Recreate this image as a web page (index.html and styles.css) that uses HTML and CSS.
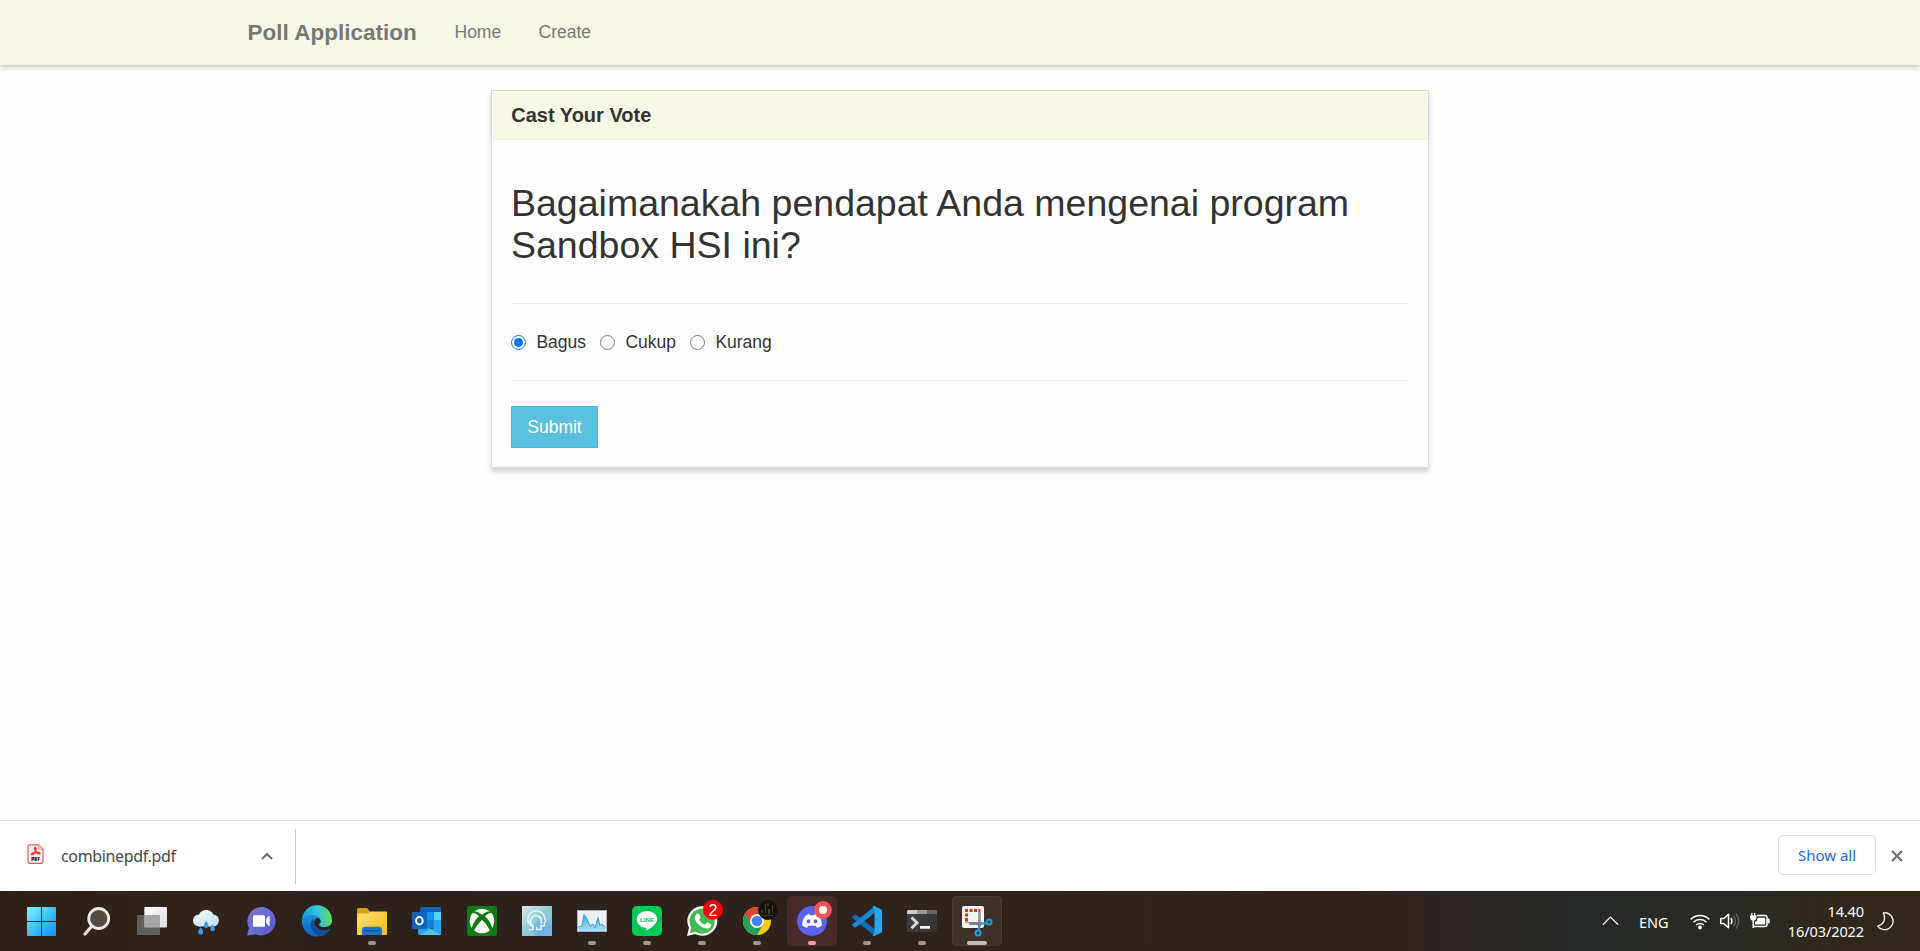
FILE: index.html
```html
<!DOCTYPE html>
<html lang="id">
<head>
<meta charset="utf-8">
<title>Poll Application</title>
<link rel="stylesheet" href="styles.css">
</head>
<body>
<div class="page">
  <nav class="navbar">
    <a class="brand">Poll Application</a>
    <a class="nav-link">Home</a>
    <a class="nav-link">Create</a>
  </nav>
  <main class="content">
    <section class="panel">
      <h3 class="panel-title">Cast Your Vote</h3>
      <form class="panel-body">
        <h2 class="question">Bagaimanakah pendapat Anda mengenai program Sandbox HSI ini?</h2>
        <div class="options">
          <label class="option"><input class="radio" type="radio" name="vote" checked><span>Bagus</span></label>
          <label class="option"><input class="radio" type="radio" name="vote"><span>Cukup</span></label>
          <label class="option"><input class="radio" type="radio" name="vote"><span>Kurang</span></label>
        </div>
        <button class="submit" type="button">Submit</button>
      </form>
    </section>
  </main>
</div>

<div class="downloads">
  <div class="download-item">
    <svg class="pdf-icon" width="17" height="20" viewBox="0 0 17 20"><path d="M2 .8h9.500l4.500 4.500v12q0 2-2 2h-11q-2 0-2-2v-14.500q0-2 1-2z" fill="#f4f4f4" stroke="#f4574d" stroke-width="1.200"/><path d="M11.500.8v4.500H16" fill="#fbb" stroke="#f8a19b"/><path d="M8 3.500c1.500 0 .8 3.500-.3 5.300-1 1.500-2.800 2.200-3.200 1.500-.5-1 3.500-2.300 6.500-2.100 2 .2 2.500 1.600 1 1.600-1.700 0-4.300-2.800-4.400-5 0-.8 0-1.300.4-1.300z" fill="none" stroke="#f23a32" stroke-width="1.600"/><path d="M5 13v4M5 13.500h1.500v1.800H5M8 13.500v3h1.200v-3zM11.200 17v-3.500h1.500M11 15.200h1.500" fill="none" stroke="#333" stroke-width="1.100"/></svg>
    <span class="file-name">combinepdf.pdf</span>
    <svg class="caret" width="12" height="8" viewBox="0 0 12 8"><path d="M1 7l5-5 5 5" fill="none" stroke="#6a6c70" stroke-width="2"/></svg>
  </div>
  <button class="show-all" type="button">Show all</button>
  <svg class="close" width="12" height="12" viewBox="0 0 12 12"><path d="M1 1l10 10M11 1L1 11" stroke="#6a6c70" stroke-width="2.200"/></svg>
</div>

<div class="taskbar">
  <div class="apps">
    <svg class="app" viewBox="0 0 50 50"><defs><linearGradient id="win" x1="10" y1="11" x2="39" y2="40" gradientUnits="userSpaceOnUse"><stop offset="0" stop-color="#7cf3ff"/><stop offset=".5" stop-color="#3dc1fa"/><stop offset="1" stop-color="#0d92fb"/></linearGradient></defs><path fill="url(#win)" d="M11 11h13v14H10V12q0-1 1-1zM25 11h13q1 0 1 1v13H25zM10 26h14v14H11q-1 0-1-1zM25 26h14v13q0 1-1 1H25z"/></svg>
    <svg class="app" viewBox="0 0 50 50"><path d="M19.500 30.500l-6.500 7.500" stroke="#dfe1e2" stroke-width="3.200" stroke-linecap="round"/><circle cx="26.700" cy="22.500" r="10" fill="#574a40" stroke="#e8eaeb" stroke-width="2.800"/></svg>
    <svg class="app" viewBox="0 0 50 50"><defs><linearGradient id="tv" x2="1" y2="1"><stop offset="0" stop-color="#fff"/><stop offset="1" stop-color="#ddd"/></linearGradient></defs><rect x="17.300" y="11" width="22.700" height="20.500" rx="1" fill="url(#tv)"/><path d="M11 19h6.300v12.500H33V38q0 1-1 1H11q-1 0-1-1V20q0-1 1-1z" fill="#5f5f5e"/><path d="M17.300 19H32q1 0 1 1v11.500H17.300z" fill="#a5a5a5"/></svg>
    <svg class="app" viewBox="0 0 50 50"><defs><linearGradient id="cl" x2="1" y2="1"><stop offset="0" stop-color="#fff"/><stop offset="1" stop-color="#b9dbf2"/></linearGradient></defs><path d="M17 30.500a6 6 0 0 1 0-12c1.300-3 4-4.500 7-4.500 4 0 6.500 2.200 7.300 4.600a6 6 0 0 1 .7 11.900z" fill="url(#cl)"/><path d="M14 22.500q4-1.500 6 1M24 19q4-2 7 0" stroke="#d5e5f0" fill="none"/><path d="M18.700 31q2.500 3.300 2.500 5a2.500 2.500 0 0 1-5 0q0-1.700 2.500-5zM24.200 25q2.400 3.300 2.400 4.800a2.300 2.300 0 0 1-4.700 0q0-1.500 2.300-4.800zM30.500 28.300q2.400 3.200 2.400 4.700a2.300 2.300 0 0 1-4.700 0q0-1.500 2.300-4.700z" fill="#3b9be8"/></svg>
    <svg class="app" viewBox="0 0 50 50"><defs><linearGradient id="ch" x1="0" y1="0" x2="1" y2=".8"><stop offset="0" stop-color="#9068b4"/><stop offset=".45" stop-color="#6a73d4"/><stop offset="1" stop-color="#5b58c6"/></linearGradient></defs><path d="M24.500 11a14.200 14.200 0 1 1-5.800 27.200L11 39.600q-1 0-.7-1l1.700-6.800A14.200 14.200 0 0 1 24.500 11z" fill="url(#ch)"/><rect x="16" y="19.200" width="12" height="11.600" rx="1.500" fill="#fff"/><path d="M29.200 23l2.600-3h.8v10h-.8l-2.600-3z" fill="#fff"/></svg>
    <svg class="app" viewBox="0 0 50 50"><defs><linearGradient id="e1" x1="0" y1=".4" x2="1" y2=".3"><stop offset="0" stop-color="#169ee2"/><stop offset=".5" stop-color="#2fc2df"/><stop offset="1" stop-color="#6bdc5b"/></linearGradient><linearGradient id="e2" x2="0" y2="1"><stop offset="0" stop-color="#1a94df"/><stop offset="1" stop-color="#0c62bd"/></linearGradient></defs><path d="M10 24A15 15 0 0 1 40 24.500c0 4-3 6.500-7.500 6.500-4 0-6-1.500-5-3 1.500-1.300 1.500-3 .5-5-2-4-12-5-18 1z" fill="url(#e1)"/><path d="M10 24.500C12 18 24 17 27.500 22c-6-1-7 6-2.500 10 4 3.300 10 2.500 13 1A15 15 0 0 1 10 24.500z" fill="url(#e2)"/><path d="M21.500 22.500c-5 4-4 13 5 17.200 5 0 9.500-3 11.800-6.700-4 2-9.500 2-13-1-2.500-2.300-4-5.500-3.800-9.500z" fill="#0d4f9d"/></svg>
    <svg class="app" viewBox="0 0 50 50"><defs><linearGradient id="fo" x2="1" y2="1"><stop offset="0" stop-color="#ffe07a"/><stop offset="1" stop-color="#fdb913"/></linearGradient></defs><path d="M10 13.500q0-1.500 1.500-1.500H20l3 3.500V19H10z" fill="#e0a010"/><path d="M10 17.500h11l2.500-2H39q1 0 1 1V38q0 1-1 1H11q-1 0-1-1z" fill="url(#fo)"/><path d="M15 39v-5q0-3.300 3.300-3.300h13.400q3.300 0 3.300 3.300v5z" fill="#1379d0"/><rect x="18" y="34" width="14" height="1.500" rx=".7" fill="#0a4f92"/><rect class="run" x="21" y="45" width="8" height="4" rx="2"/></svg>
    <svg class="app" viewBox="0 0 50 50"><path d="M20 11h18q1 0 1 1v15H18V13q0-2 2-2z" fill="#0e61b4"/><path d="M18 16h7v8h-7z" fill="#1272c4"/><path d="M25 16h7v8h-7z" fill="#1796e6"/><path d="M32 16h7v8h-7z" fill="#50d5ff"/><path d="M18 24h14v8H18z" fill="#1381d3"/><path d="M32 24h7v8h-7z" fill="#27a5ed"/><path d="M16 28l14 5 9-6v12H18q-2 0-2-2z" fill="#2aa4e9"/><path d="M28 33l11 6H18z" fill="#57bdf2"/><rect x="10" y="16" width="15" height="17" rx="1" fill="#0e64bb"/><ellipse cx="17.400" cy="24.700" rx="3.300" ry="3.700" fill="none" stroke="#fff" stroke-width="2"/></svg>
    <svg class="app" viewBox="0 0 50 50"><rect x="10" y="10" width="30" height="30" rx="2.500" fill="#107c10"/><circle cx="25" cy="25" r="12.300" fill="#fff"/><path d="M16 15.500c3.500-.7 6.500 1.500 9 3.300 2.500-1.800 5.500-4 9-3.300l1 1.500c-2.700-.2-5 1-7 3.300 4 4 7 8.500 7.200 13l-2 2C31.500 31 28.500 27 25 24c-3.500 3-6.500 7-8.200 11.300l-2-2c.2-4.500 3.200-9 7.200-13-2-2.300-4.300-3.500-7-3.300z" fill="#107c10"/></svg>
    <svg class="app" viewBox="0 0 50 50"><defs><linearGradient id="hd" x2="1" y2="1"><stop offset="0" stop-color="#dfe8e8"/><stop offset=".5" stop-color="#8ccbd5"/><stop offset="1" stop-color="#77b8e5"/></linearGradient></defs><path d="M10 10h30v30H10z" fill="url(#hd)"/><path d="M17 32l8 8h15V30l-8-8z" fill="#69aee8" opacity=".6"/><path d="M17 33.500h4v-3c-3.500-1.500-5.200-4-5.200-7.500a8.500 8.500 0 0 1 16.800-1.500c.3 2 1.400 3.600 1 4.200l-1.200.7v3.300h-3.400v3.800h-4.200v-2.800" fill="none" stroke="#e7f7fc" stroke-width="1.500"/><path d="M21.500 30a5.500 5.500 0 1 1 7.300-2.300" fill="none" stroke="#e7f7fc" stroke-width="1.500"/></svg>
    <svg class="app" viewBox="0 0 50 50"><defs><linearGradient id="gr" x2="0" y2="1"><stop offset="0" stop-color="#3ba6dc"/><stop offset="1" stop-color="#a8e0fa"/></linearGradient></defs><rect x="10.500" y="14.500" width="29" height="21" fill="#eaf0f5" stroke="#aab2b8"/><path d="M11.500 31l3.500-1 2-11.500 3 4 3 7.500 3-2 2 3.500 3-10 2 8 2-1.500 3.500 3V35h-27z" fill="url(#gr)"/><path d="M11.500 31l3.500-1 2-11.500 3 4 3 7.500 3-2 2 3.500 3-10 2 8 2-1.500 3.500 3" fill="none" stroke="#459cc9"/><rect class="run" x="21" y="45" width="8" height="4" rx="2"/></svg>
    <svg class="app" viewBox="0 0 50 50"><rect x="10" y="10" width="30" height="30" rx="5" fill="#07c755"/><path d="M25 15c5.800 0 10.200 3.600 10.200 8.200 0 4.200-5 8-10.400 11.300-.9.400-.4-1.300-.5-2.600-5.500-.2-9.500-4-9.500-8.700C14.800 18.600 19.200 15 25 15z" fill="#fff"/><text x="25" y="25.700" class="line-word">LINE</text><rect class="run" x="21" y="45" width="8" height="4" rx="2"/></svg>
    <svg class="app" viewBox="0 0 50 50"><path d="M10 40l2-8.200A15 14.800 0 1 1 18.200 38z" fill="#fff"/><path d="M12.700 37.300l1.600-5.700A12.700 12.600 0 1 1 18.500 35.800z" fill="#42bc50"/><path d="M20.200 17.800c1-.5 1.800-.2 2.200.7l1 2.600c.2.900-.7 1.800-1.300 2.400 1.200 2.500 3 4.200 5.700 5.200l1.800-2c.4-.4.900-.4 1.400-.2l2.700 1.400c.8.500.4 2.100-.2 3-1 1.400-3.200 1.900-5 1.400-5-1.300-9.200-5-10.700-9.600-.4-2 .7-4 2.400-4.900z" fill="#fff"/><circle cx="36" cy="13.800" r="10" fill="#f00505"/><text x="36" y="19.500" class="badge-count">2</text><rect class="run" x="21" y="45" width="8" height="4" rx="2"/></svg>
    <svg class="app" viewBox="0 0 50 50"><circle cx="25" cy="25" r="14" fill="#fbc917"/><path d="M12.900 18A14 14 0 0 1 37.100 18H25a7 7 0 0 0-6.100 10.500z" fill="#e2453a"/><path d="M12.900 18A14 14 0 0 0 25 39l6.100-10.500a7 7 0 0 1-12.200 0z" fill="#1fa35a"/><circle cx="25" cy="25" r="6.800" fill="#fff"/><circle cx="25" cy="25" r="5.300" fill="#3f82ee"/><circle cx="36" cy="14" r="10" fill="#14130f"/><path d="M29 14h2v3h-2zM33 8h1v9h-1zM36 13h2v5h-2zM40 9h1v8h-1z" fill="#4a3f26"/><path d="M30 19h11v1H30zM35 7h2v3h-2z" fill="#343d27"/><rect class="run" x="21" y="45" width="8" height="4" rx="2"/></svg>
    <svg class="app alert" viewBox="0 0 50 50"><circle cx="25" cy="25" r="15" fill="#5865f2"/><path d="M20.500 18.500l1.500-.7.800 1.500h4.400l.8-1.500 2.500.8c2.500 1.200 4.600 7 4.300 11-1.500 1.300-3.200 1.900-4.800 2.200l-1.200-2.100h-7.600L20 31.800c-1.600-.3-3.300-.9-4.800-2.200-.3-4 1.800-9.800 5.300-11.100z" fill="#fff"/><ellipse cx="21.500" cy="25.300" rx="1.900" ry="2.100" fill="#5865f2"/><ellipse cx="28.500" cy="25.300" rx="1.900" ry="2.100" fill="#5865f2"/><circle cx="36" cy="14" r="9" fill="#ee5557"/><circle cx="36" cy="14" r="4" fill="#fff"/><rect x="21" y="45" width="8" height="4" rx="2" fill="#ff99a4"/></svg>
    <svg class="app" viewBox="0 0 50 50"><path d="M10.500 20.500l2-1.700q.8-.6 1.600 0L34 34v5.500L31.500 39 10.500 21.700q-.6-.6 0-1.200z" fill="#0c71bd"/><path d="M10.500 29.500l2 1.700q.8.600 1.600 0L34 16v-5.500l-2.500.5L10.500 28.300q-.6.600 0 1.200z" fill="#1488d2"/><path d="M32 10l7 3.300q1 .5 1 1.700v20q0 1.200-1 1.700L32 40q-1 .3-1.500-.5l2-2V12.500l-2-2Q31 9.700 32 10z" fill="#29a6f0"/><rect class="run" x="21" y="45" width="8" height="4" rx="2"/></svg>
    <svg class="app" viewBox="0 0 50 50"><defs><linearGradient id="tm" x2="1" y2="1"><stop offset="0" stop-color="#454545"/><stop offset="1" stop-color="#303030"/></linearGradient></defs><rect x="10" y="14" width="30" height="22" rx="1.500" fill="url(#tm)"/><path d="M11.500 14H20v4H10v-2.500q0-1.500 1.500-1.500z" fill="#ccc"/><path d="M20 14h10v4H20z" fill="#999"/><path d="M30 14h8.500q1.500 0 1.500 1.500V18H30z" fill="#686868"/><path d="M14.500 21.500l5.500 5.200-5.500 5.500" fill="none" stroke="#d8d8d8" stroke-width="2.900"/><path d="M23 30h10v2.800H23z" fill="#f5f5f5"/><rect class="run" x="21" y="45" width="8" height="4" rx="2"/></svg>
    <svg class="app active" viewBox="0 0 50 50"><rect x="10" y="10" width="22" height="22" rx="2" fill="#f5f5f5"/><path d="M13 13h3v3h-3zM17.500 13h3v3h-3zM22 13h3v3h-3zM26.500 13h2v3h-2zM13 17.500h3v3h-3zM13 22h3v3h-3zM13 26.500h3v-1h-3z" fill="#d83b01"/><path d="M26 16h3v14h-3z" fill="#9a9fa4"/><path d="M16 26h14v3H18z" fill="#788087"/><path d="M29 27.500h5.500M27.500 29l-1 5.500" stroke="#1b9de2" stroke-width="2.200"/><circle cx="37" cy="26" r="2.500" fill="none" stroke="#1b9de2" stroke-width="2"/><circle cx="26" cy="37" r="2.500" fill="none" stroke="#1b9de2" stroke-width="2"/><rect x="15" y="45" width="20" height="4" rx="2" fill="#c0bdba"/></svg>
  </div>
  <div class="tray">
    <svg width="17" height="10" viewBox="0 0 17 10"><path d="M.8 8.800l7.700-7.700 7.700 7.700" fill="none" stroke="#eee" stroke-width="1.300"/></svg>
    <span class="lang">ENG</span>
    <div class="status">
      <svg width="20" height="18" viewBox="0 0 20 18"><g fill="none" stroke="#fff" stroke-width="1.500"><path d="M.7 7.500a13 13 0 0 1 18.600 0"/><path d="M3.500 10.300a9.200 9.200 0 0 1 13 0"/><path d="M6.200 13a5.400 5.400 0 0 1 7.600 0"/></g><circle cx="10" cy="15.500" r="1.900" fill="#fff"/></svg>
      <svg width="20" height="18" viewBox="0 0 20 18"><path d="M.8 6.500h3l4.700-4.300v13.600l-4.700-4.300h-3z" fill="none" stroke="#fff" stroke-width="1.500" stroke-linejoin="round"/><path d="M11 6q2 3 0 6" fill="none" stroke="#fff" stroke-width="1.500"/><path d="M13.500 3.700q4 5.300 0 10.600M16 1.500q5.500 7.500 0 15" fill="none" stroke="#66625c" stroke-width="1.300"/></svg>
      <svg width="20" height="18" viewBox="0 0 20 18"><path d="M7 3.500h8q2 0 2 2v7q0 2-2 2H4" fill="none" stroke="#fff" stroke-width="1.500"/><path d="M7.500 5.700h7.700v6.700H5V9.500q2.500-.5 2.500-3z" fill="#fff"/><path d="M17.500 6.500H19q.8 0 .8 2.500t-.8 2.500h-1.500zM0 3.500h1.200V1h1.300v2.500H4V1h1.300v2.500H6.500v2Q6 8 4 8.500V16H2.500V8.500Q0 8 0 5.500z" fill="#fff"/></svg>
    </div>
    <div class="clock"><span>14.40</span><span>16/03/2022</span></div>
    <svg class="moon" width="17" height="19" viewBox="0 0 17 19"><path d="M6.500.9a8.400 8.400 0 1 1-5.700 13.200C6.500 12.500 9 8 6.500.9z" fill="none" stroke="#eee" stroke-width="1.400" stroke-linejoin="round"/></svg>
  </div>
</div>
</body>
</html>
```
FILE: styles.css
```css
* { box-sizing: border-box; }

body {
  margin: 0;
  height: 951px;
  display: flex;
  flex-direction: column;
  overflow: hidden;
  background: #fefefe;
  color: #333;
  font-family: "Liberation Sans", Arial, sans-serif;
  font-size: 17.5px;
}

.page { height: 820px; }

.navbar {
  display: flex;
  height: 65px;
  padding: 20px 247.5px 0;
  line-height: 25px;
  background: #f7f7e5;
  box-shadow: 0 2.5px 5px rgba(0, 0, 0, .22);
  color: #777;
}
.brand { width: 207px; font-size: 22.5px; font-weight: bold; }
.nav-link { width: 84px; }

.content { display: flex; justify-content: center; padding-top: 25px; }

.panel {
  width: 937.5px;
  height: 378px;
  border: 1px solid #d8d8d8;
  background: #fefefe;
  box-shadow: 0 4px 5px rgba(0, 0, 0, .17);
}
.panel-title {
  height: 49px;
  margin: 0 0 0 1px;
  padding: 0 18px;
  border-bottom: 1px solid #f1f1dc;
  background: #f7f7e5;
  font-size: 20px;
  line-height: 49px;
}
.panel-body { padding: 42px 18.75px 18.75px; }
.question {
  height: 121px;
  margin: 0;
  font-size: 37.5px;
  font-weight: normal;
  line-height: 42px;
}
.options {
  display: flex;
  align-items: center;
  gap: 14px;
  height: 78px;
  border: solid #eee;
  border-width: 1px 0;
}
.option { display: flex; align-items: center; gap: 10.4px; }
.radio { width: 15px; height: 15px; margin: 1px 0 0; accent-color: #0075ff; }
.submit {
  width: 87px;
  height: 42px;
  margin-top: 25px;
  padding: 0;
  border: 1px solid #46b8da;
  background: #5bc0de;
  color: #fff;
  font: 17.5px "Liberation Sans", Arial, sans-serif;
}

.downloads {
  display: flex;
  align-items: center;
  height: 71px;
  padding-right: 17px;
  border-top: 1px solid #d6d6d8;
  background: #fff;
  font-family: "Noto Sans", sans-serif;
}
.download-item {
  display: flex;
  align-items: center;
  width: 296px;
  height: 55px;
  padding: 0 22px 0 27px;
  border-right: 1px solid #c5c5c8;
}
.pdf-icon { margin: 0 17px 4px 0; }
.file-name { flex: 1; color: #45474b; font-size: 16px; letter-spacing: -.35px; }
.show-all {
  width: 98px;
  height: 40px;
  margin: 0 15px 2px auto;
  border: 1px solid #dadce0;
  border-radius: 5px;
  background: #fff;
  color: #1a67ed;
  font: 15px "Noto Sans", sans-serif;
}

.taskbar {
  display: flex;
  justify-content: space-between;
  height: 60px;
  padding: 5px 26px 5px 17px;
  background: linear-gradient(90deg, #302015 0, #30231a 10%, #2b221f 20%, #2d221e 40%, #30231a 53%, #2e251d 60%, #342118 69%, #2d2523 75%, #272a28 82%, #292a25 90%, #30281a 96%, #30281a 100%);
  color: #fff;
  font-family: "Noto Sans", sans-serif;
}
.apps { display: flex; gap: 5px; }
.app { width: 50px; height: 50px; border-radius: 5px; }
.alert { background: #472a2b; }
.active { background: #3d312a; box-shadow: inset 0 0 0 1px #483d36; }
.run { fill: #9b9794; }
.line-word { fill: #07c755; font: bold 6.2px "Liberation Sans", sans-serif; text-anchor: middle; }
.badge-count { fill: #fff; font: 16px "Liberation Sans", sans-serif; text-anchor: middle; }

.tray { display: flex; align-items: center; }
.lang { width: 51px; margin: 2px 0 0 20px; font-size: 14.5px; }
.status { display: flex; gap: 10px; }
.clock {
  display: flex;
  flex-direction: column;
  width: 94px;
  text-align: right;
  font-size: 14.5px;
  letter-spacing: -.1px;
  line-height: 20px;
  padding-bottom: 1px;
}
.moon { margin-left: 13px; }
```
